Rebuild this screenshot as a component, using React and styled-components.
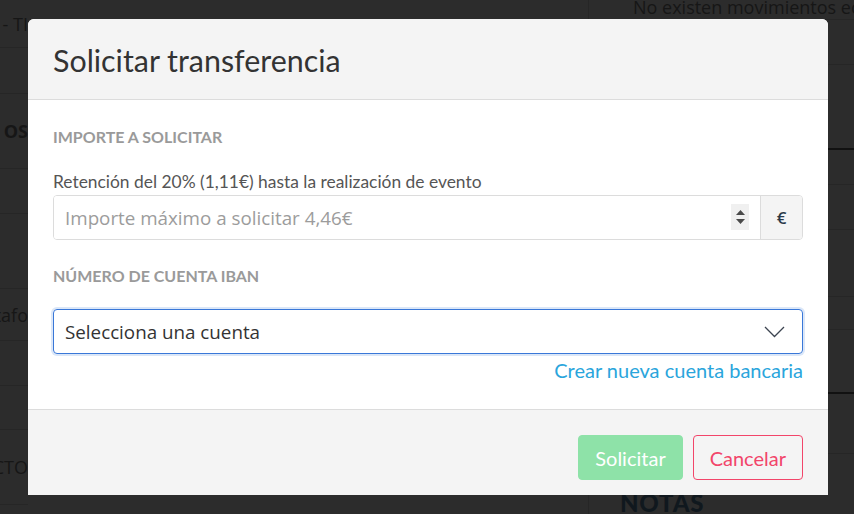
import React from 'react'
import styled, { createGlobalStyle } from 'styled-components'

const GlobalStyle = createGlobalStyle`
    html, body {
        margin: 0;
        padding: 0;
        background: #2c2c2c;
        font-family: Lato, "Liberation Sans", sans-serif;
    }
    * { box-sizing: border-box; }
`

const Page = styled.div`
    position: relative;
    width: 854px;
    height: 514px;
    overflow: hidden;
    background: #2c2c2c;
    display: flex;
    justify-content: space-between;
`
const SideColumn = styled.div`
    width: ${props => props.width}px;
    display: flex;
    flex-direction: column;
    border-left: ${props => props.divider ? '1px solid #262626' : 'none'};
`
const BgRow = styled.div`
    height: ${props => props.h}px;
    flex-shrink: 0;
    border-bottom: ${props => props.thick ? '2px solid #111' : '1px solid #262626'};
    display: flex;
    align-items: center;
    justify-content: ${props => props.align || 'flex-end'};
    color: #161616;
    font-family: "Open Sans", sans-serif;
    font-size: 18px;
    font-weight: ${props => props.bold ? 700 : 400};
    white-space: nowrap;
    overflow: hidden;
    padding-left: ${props => props.pl || 0}px;
    padding-bottom: ${props => props.pb || 0}px;
`
const NotesTitle = styled.div`
    margin: 34px 0 0 31px;
    font-family: Lato, sans-serif;
    font-weight: 900;
    font-size: 24px;
    color: #10181e;
    letter-spacing: 0.8px;
`
const Overlay = styled.div`
    position: absolute;
    inset: 0;
    display: flex;
    padding: 19px 0 0 28px;
`
const Modal = styled.div`
    width: 800px;
    height: 476px;
    display: flex;
    flex-direction: column;
    background: #fff;
    border-radius: 6px 6px 0 0;
    overflow: hidden;
`
const Header = styled.div`
    height: 81px;
    flex-shrink: 0;
    background: #f4f4f4;
    border-bottom: 1px solid #dcdcdc;
    padding: 2px 25px 0;
    display: flex;
    align-items: center;
`
const Title = styled.h2`
    margin: 0;
    font-weight: 400;
    font-size: 30.4px;
    color: #333;
`
const Body = styled.div`
    padding: 27px 25px 27px;
    display: flex;
    flex-direction: column;
`
const SectionLabel = styled.div`
    font-size: 16px;
    line-height: 20px;
    font-weight: 700;
    color: #9a9a9a;
    text-transform: uppercase;
    margin-top: ${props => props.mt || 0}px;
`
const Hint = styled.div`
    margin-top: 24px;
    font-size: 17.4px;
    line-height: 22px;
    color: #555;
`
const InputGroup = styled.div`
    margin-top: 2px;
    height: 45px;
    display: flex;
    border: 1px solid #dcdcdc;
    border-radius: 4px;
    overflow: hidden;
`
const AmountInput = styled.input`
    flex: 1;
    border: none;
    outline: none;
    padding: 0 11px;
    font-family: "Open Sans", sans-serif;
    font-size: 18.8px;
    color: #333;
    &::placeholder { color: #9c9c9c; }
`
const Spinner = styled.div`
    width: 18px;
    height: 26px;
    margin: 8px 11px 0 0;
    background: #f0f0f0;
    display: flex;
    flex-direction: column;
    align-items: center;
    justify-content: center;
    gap: 4px;
`
const Addon = styled.div`
    width: 42px;
    border-left: 1px solid #dcdcdc;
    background: #f4f4f4;
    display: flex;
    align-items: center;
    justify-content: center;
    font-family: "Open Sans", sans-serif;
    font-weight: 600;
    font-size: 17px;
    color: #2a3a4a;
`
const Select = styled.div`
    margin-top: 23px;
    height: 45px;
    border: 1px solid #3a78d8;
    border-radius: 4px;
    box-shadow: 0 0 0 2px rgba(58, 120, 216, 0.18);
    display: flex;
    align-items: center;
    justify-content: space-between;
    padding: 0 17px 0 11px;
    font-family: "Open Sans", sans-serif;
    font-size: 18.8px;
    color: #333;
`
const Link = styled.a`
    margin-top: 4px;
    align-self: flex-end;
    font-size: 20px;
    line-height: 24px;
    color: #2aa5dc;
    cursor: pointer;
`
const Footer = styled.div`
    flex: 1;
    background: #f4f4f4;
    border-top: 1px solid #dcdcdc;
    padding: 25px 25px 0;
    display: flex;
    justify-content: flex-end;
    align-items: flex-start;
    gap: 10px;
`
const Button = styled.button`
    height: 45px;
    padding: 0 16px;
    border-radius: 4px;
    font-family: Lato, sans-serif;
    font-size: 20px;
    cursor: pointer;
    background: ${props => props.primary ? '#8ee2a8' : 'transparent'};
    color: ${props => props.primary ? '#fff' : '#f2456a'};
    border: 1px solid ${props => props.primary ? '#8ee2a8' : '#f2456a'};
`

const left = [
    { h: 48, text: 's - TI' },
    { h: 46 },
    { h: 75, text: 'OS', bold: true },
    { h: 45 },
    { h: 75 },
    { h: 52, text: 'tafo' },
    { h: 45 },
    { h: 44 },
    { h: 75, text: 'CTO' },
]
const right = [
    { h: 20, text: 'No existen movimientos económicos', align: 'flex-start', pl: 44, pb: 6 },
    { h: 45 },
    { h: 85, thick: true },
    { h: 35 },
    { h: 45 },
    { h: 67 },
    { h: 33 },
    { h: 64, thick: true },
    { h: 60 },
]

const App = () => {
  return (
    <>
        <GlobalStyle/>
        <Page>
            <SideColumn width={28}>
                {left.map((r, i) => (
                    <BgRow key={i} h={r.h} bold={r.bold}>{r.text}</BgRow>
                ))}
            </SideColumn>
            <SideColumn width={266} divider>
                {right.map((r, i) => (
                    <BgRow key={i} h={r.h} thick={r.thick} align={r.align} pl={r.pl} pb={r.pb}>{r.text}</BgRow>
                ))}
                <NotesTitle>NOTAS</NotesTitle>
            </SideColumn>
            <Overlay>
                <Modal>
                    <Header>
                        <Title>Solicitar transferencia</Title>
                    </Header>
                    <Body>
                        <SectionLabel>Importe a solicitar</SectionLabel>
                        <Hint>Retención del 20% (1,11€) hasta la realización de evento</Hint>
                        <InputGroup>
                            <AmountInput placeholder='Importe máximo a solicitar 4,46€'/>
                            <Spinner>
                                <svg width="9" height="5" viewBox="0 0 9 5"><path d="M4.5 0 L9 5 L0 5 Z" fill="#4a4a4a"/></svg>
                                <svg width="9" height="5" viewBox="0 0 9 5"><path d="M0 0 L9 0 L4.5 5 Z" fill="#4a4a4a"/></svg>
                            </Spinner>
                            <Addon>€</Addon>
                        </InputGroup>
                        <SectionLabel mt={26}>Número de cuenta IBAN</SectionLabel>
                        <Select>
                            <span>Selecciona una cuenta</span>
                            <svg width="21" height="12" viewBox="0 0 21 12">
                                <path d="M1 1 L10.5 10.5 L20 1" fill="none" stroke="#3c4450" strokeWidth="1.3"/>
                            </svg>
                        </Select>
                        <Link>Crear nueva cuenta bancaria</Link>
                    </Body>
                    <Footer>
                        <Button primary>Solicitar</Button>
                        <Button>Cancelar</Button>
                    </Footer>
                </Modal>
            </Overlay>
        </Page>
    </>
  )
}

export default App
